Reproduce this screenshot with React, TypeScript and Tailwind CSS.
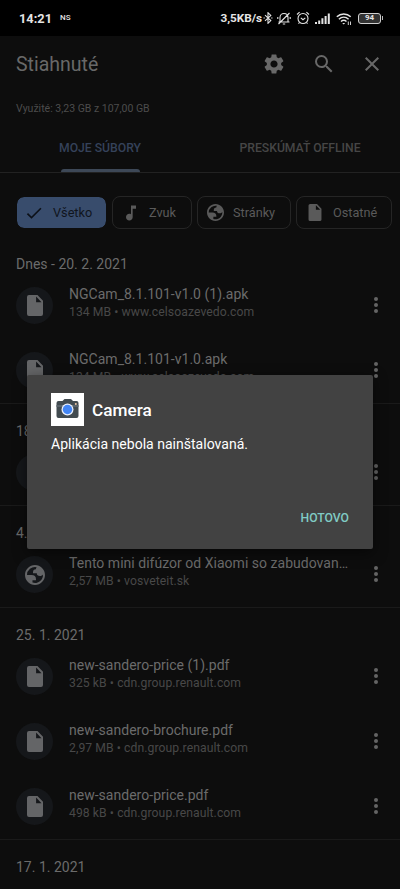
import type { ReactNode } from "react";
import { MdCheck, MdClose, MdMusicNote, MdSearch, MdSettings } from "react-icons/md";

type Kind = "file" | "page";

interface Download {
  name: string;
  meta: string;
  kind: Kind;
}

interface Section {
  date: string;
  items: Download[];
}

const SECTIONS: Section[] = [
  {
    date: "Dnes - 20. 2. 2021",
    items: [
      { name: "NGCam_8.1.101-v1.0 (1).apk", meta: "134 MB • www.celsoazevedo.com", kind: "file" },
      { name: "NGCam_8.1.101-v1.0.apk", meta: "134 MB • www.celsoazevedo.com", kind: "file" },
    ],
  },
  { date: "18. 2. 2021", items: [{ name: "", meta: "", kind: "file" }] },
  {
    date: "4. 2. 2021",
    items: [
      { name: "Tento mini difúzor od Xiaomi so zabudovan…", meta: "2,57 MB • vosveteit.sk", kind: "page" },
    ],
  },
  {
    date: "25. 1. 2021",
    items: [
      { name: "new-sandero-price (1).pdf", meta: "325 kB • cdn.group.renault.com", kind: "file" },
      { name: "new-sandero-brochure.pdf", meta: "2,97 MB • cdn.group.renault.com", kind: "file" },
      { name: "new-sandero-price.pdf", meta: "498 kB • cdn.group.renault.com", kind: "file" },
    ],
  },
  { date: "17. 1. 2021", items: [] },
];

function FileIcon({ className }: { className: string }) {
  return (
    <svg viewBox="0 0 16 21" className={className} fill="currentColor">
      <path fillRule="evenodd" d="M2 0h8.5L16 5.800V19a2 2 0 0 1-2 2H2a2 2 0 0 1-2-2V2a2 2 0 0 1 2-2zm7.100 1.600V7.200h5.400z" />
    </svg>
  );
}

function GlobeIcon({ className }: { className: string }) {
  return (
    <svg viewBox="2 2 20 20" className={className} fill="currentColor">
      <path
        fillRule="evenodd"
        d="M12 2C6.480 2 2 6.480 2 12s4.480 10 10 10 10-4.480 10-10S17.520 2 12 2zM4 12h4.400c3.407.022 4.922 1.730 4.543 5.127H9.488v2.470a8.004 8.004 0 0 0 10.498-8.083C19.327 12.504 18.332 13 17 13c-2.137 0-3.206-.916-3.206-2.750h-3.748c-.274-2.728.683-4.092 2.870-4.092 0-.975.327-1.597.811-1.970A8.004 8.004 0 0 0 4 12z"
      />
    </svg>
  );
}

function StatusBar() {
  return (
    <div className="flex h-9 items-center bg-black pl-[19px] pr-[17px] text-[#e4e4e4]">
      <span className="pt-px text-[12.800px] font-bold leading-4">14:21</span>
      <span className="ml-2 text-[8px] font-medium">NS</span>
      <span className="ml-auto pt-px text-[11.800px] font-bold tracking-[-0.050px]">3,5KB/s</span>
      <svg viewBox="0 0 10 12" className="ml-px h-3 w-2.5" fill="none" stroke="currentColor" strokeWidth="1.100">
        <path d="M2 3.200 7.800 8.600 5 11.300V.7l2.800 2.700L2 8.800" />
        <path d="M.5 6h1.300M8.200 6h1.300" />
      </svg>
      <svg viewBox="0 0 14 13" className="ml-1 h-[13px] w-3.5" fill="none" stroke="currentColor" strokeWidth="1.100">
        <path d="M3 9.500V5.500C3 3 4.700 1.500 7 1.500s4 1.500 4 4v4M1.500 10h11M5.800 12h2.400M12.500 1 1.500 12M.8 5v2M13.200 5v2" />
      </svg>
      <svg viewBox="0 0 14 14" className="ml-[5px] h-3.5 w-3.5" fill="none" stroke="currentColor" strokeWidth="1.100">
        <circle cx="7" cy="7.500" r="5" />
        <path d="M1 3.500 3.600 1.200M13 3.500l-2.600-2.300M4.800 6.800 7 8.700l2.300-1.900M3.500 11.500l-1 1.200M10.500 11.500l1 1.200" />
      </svg>
      <svg viewBox="0 0 15 11" className="ml-[5px] h-[11px] w-[15px]" fill="currentColor">
        <path d="M0 9h2v2H0zM3.200 7.500h2V11h-2zM6.400 5.300h2V11h-2zM9.600 3h2v8h-2zM12.800.5h2V11h-2z" />
      </svg>
      <svg viewBox="0 0 16 13" className="ml-[6px] h-[13px] w-4" fill="none" stroke="currentColor" strokeWidth="1.500">
        <path d="M.8 4.800C4.800 1 10.700 1 14.700 4.800M2.900 7.300c2.900-2.700 6.800-2.700 9.700 0M5 9.500c1.700-1.500 3.800-1.500 5.500 0" />
        <path d="m6.200 11 1.500 1.500L9.200 11z" fill="currentColor" stroke="none" />
        <path d="M12.300 9.500V13M14.500 9.500V13" strokeWidth=".9" />
      </svg>
      <div className="ml-[6px] flex h-[11px] w-[23px] items-center justify-center rounded-[3px] border border-[#d0d0d0] bg-[#333] text-[8px] font-bold leading-none">
        94
      </div>
      <div className="ml-px h-1 w-px bg-[#bbb]" />
    </div>
  );
}

function Chip({ icon, label, className }: { icon: ReactNode; label: string; className: string }) {
  return (
    <div className={`flex h-[33px] shrink-0 items-center rounded-lg border text-[12.700px] ${className}`}>
      {icon}
      {label}
    </div>
  );
}

function Row({ item }: { item: Download }) {
  return (
    <div className="flex h-[65px] items-center pl-4 pr-[22px]">
      <div className="flex h-[37px] w-[37px] shrink-0 items-center justify-center rounded-full bg-[#15171a] text-[#646567]">
        {item.kind === "page" ? <GlobeIcon className="h-5 w-5" /> : <FileIcon className="h-[21px] w-4" />}
      </div>
      <div className="-mt-1 mb-px ml-4 w-[285px]">
        <div className="h-[18px] whitespace-nowrap text-[14px] leading-4 tracking-[0.020px] text-[#6b6b6b]">{item.name}</div>
        <div className="h-[17px] whitespace-nowrap text-[12.200px] leading-[17px] tracking-[0.070px] text-[#484848]">{item.meta}</div>
      </div>
      <div className="mb-px ml-auto flex flex-col gap-[2px] text-[#646464]">
        <span className="h-1 w-1 rounded-full bg-current" />
        <span className="h-1 w-1 rounded-full bg-current" />
        <span className="h-1 w-1 rounded-full bg-current" />
      </div>
    </div>
  );
}

function Dialog() {
  return (
    <div className="absolute left-[27px] top-[375px] flex h-[174px] w-[346px] flex-col rounded-[2px] bg-[#424242] px-6 pt-[18px] text-white shadow-[0_4px_14px_rgba(0,0,0,0.5)]">
      <div className="flex items-center">
        <svg viewBox="0 0 33 33" className="h-[33px] w-[33px]">
          <path fill="#fff" d="M0 0h33v33H0z" />
          <path fill="#424b50" d="M7.500 8h4l2-2h6.500l2 2h3.500a2 2 0 0 1 2 2V23a2 2 0 0 1-2 2h-18a2 2 0 0 1-2-2V10a2 2 0 0 1 2-2z" />
          <path fill="#59636a" d="M5.500 12h22v2h-22z" />
          <circle cx="16.500" cy="16.500" r="6" fill="#e8eefb" />
          <circle cx="16.500" cy="16.500" r="4.700" fill="#4285f4" />
          <circle cx="24.800" cy="11" r="1" fill="#f2c9a8" />
        </svg>
        <span className="ml-2 text-[17.200px] font-medium leading-6">Camera</span>
      </div>
      <p className="mt-2 text-[14.050px] leading-5">Aplikácia nebola nainštalovaná.</p>
      <button className="mb-[22px] ml-auto mt-auto text-[12.200px] font-medium leading-[18px] text-[#80cbc4]">HOTOVO</button>
    </div>
  );
}

export default function App() {
  return (
    <div className="relative h-[889px] w-[400px] overflow-hidden bg-[#0d0d0d] font-[Roboto,sans-serif]">
      <StatusBar />
      <header className="flex h-14 items-center pl-4 pr-[16px] text-[#686868]">
        <h1 className="pt-0.5 text-[19.500px]">Stiahnuté</h1>
        <MdSettings className="ml-auto h-6 w-6" />
        <MdSearch className="ml-[26px] h-6 w-6" />
        <MdClose className="ml-6 h-6 w-6" />
      </header>
      <p className="h-[31px] pl-4 pt-[8px] text-[10.500px] leading-[17px] text-[#4c4c4c]">Využité: 3,23 GB z 107,00 GB</p>
      <nav className="flex h-[50px] border-b border-[#222] text-[12.200px] font-medium text-[#464646]">
        <div className="flex w-1/2 flex-col items-center">
          <span className="flex h-[46px] items-center pt-1 text-[#35425a]">MOJE SÚBORY</span>
          <span className="h-[3px] w-[79px] rounded-t-[3px] bg-[#3d4857]" />
        </div>
        <div className="flex h-[46px] w-1/2 items-center justify-center pt-1">PRESKÚMAŤ OFFLINE</div>
      </nav>
      <div className="flex h-[64px] items-start pl-4 pt-[23px] text-[#5a5a5a]">
        <Chip
          icon={<MdCheck className="ml-[7px] mr-[9px] h-5 w-5 text-[#0c1118]" />}
          label="Všetko"
          className="w-[91px] border-[#0d0d0d] bg-[#384c6c] bg-clip-padding text-[#10151d]"
        />
        <Chip icon={<MdMusicNote className="ml-2 mr-2 h-5 w-5" />} label="Zvuk" className="ml-[5px] w-20 border-[#252525]" />
        <Chip icon={<GlobeIcon className="ml-[9px] mr-[9px] h-[17px] w-[17px]" />} label="Stránky" className="ml-[5px] w-[94px] border-[#252525]" />
        <Chip icon={<FileIcon className="ml-[11px] mr-[11px] h-[17px] w-[14px]" />} label="Ostatné" className="ml-[5px] w-24 border-[#252525]" />
      </div>
      {SECTIONS.map((section, i) => (
        <section key={section.date}>
          <div
            className={`flex items-end border-t pl-4 text-[14px] leading-[18px] text-[#6b6b6b] ${i ? "h-[37px] border-[#1a1a1a]" : "h-9 border-transparent"}`}
          >
            {section.date}
          </div>
          {section.items.map((item) => (
            <Row key={item.name} item={item} />
          ))}
        </section>
      ))}
      <Dialog />
    </div>
  );
}
